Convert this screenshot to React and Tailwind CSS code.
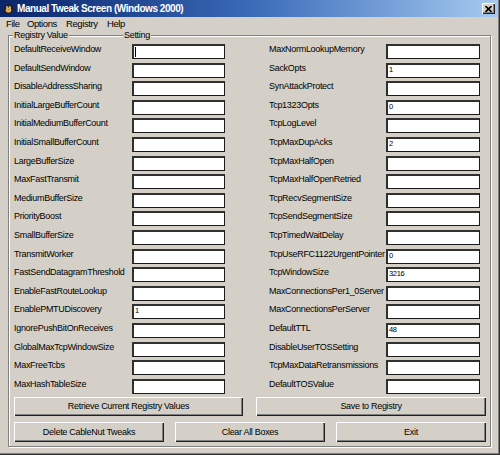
import React from "react";

const left = [
  ["DefaultReceiveWindow", "caret"],
  ["DefaultSendWindow", ""],
  ["DisableAddressSharing", ""],
  ["InitialLargeBufferCount", ""],
  ["InitialMediumBufferCount", ""],
  ["InitialSmallBufferCount", ""],
  ["LargeBufferSize", ""],
  ["MaxFastTransmit", ""],
  ["MediumBufferSize", ""],
  ["PriorityBoost", ""],
  ["SmallBufferSize", ""],
  ["TransmitWorker", ""],
  ["FastSendDatagramThreshold", ""],
  ["EnableFastRouteLookup", ""],
  ["EnablePMTUDiscovery", "1"],
  ["IgnorePushBitOnReceives", ""],
  ["GlobalMaxTcpWindowSize", ""],
  ["MaxFreeTcbs", ""],
  ["MaxHashTableSize", ""],
];

const right = [
  ["MaxNormLookupMemory", ""],
  ["SackOpts", "1"],
  ["SynAttackProtect", ""],
  ["Tcp1323Opts", "0"],
  ["TcpLogLevel", ""],
  ["TcpMaxDupAcks", "2"],
  ["TcpMaxHalfOpen", ""],
  ["TcpMaxHalfOpenRetried", ""],
  ["TcpRecvSegmentSize", ""],
  ["TcpSendSegmentSize", ""],
  ["TcpTimedWaitDelay", ""],
  ["TcpUseRFC1122UrgentPointer", "0"],
  ["TcpWindowSize", "3216"],
  ["MaxConnectionsPer1_0Server", ""],
  ["MaxConnectionsPerServer", ""],
  ["DefaultTTL", "48"],
  ["DisableUserTOSSetting", ""],
  ["TcpMaxDataRetransmissions", ""],
  ["DefaultTOSValue", ""],
];

function Box({ value, w }) {
  return (
    <div
      className={`${w} h-[15px] bg-white border-t-2 border-l-2 border-r border-b border-t-[#303030] border-l-[#303030] border-r-[#1a1a1a] border-b-[#1a1a1a] flex items-start`}
    >
      {value === "caret" ? (
        <span className="ml-px mt-px w-px h-[10px] bg-black" />
      ) : value ? (
        <span className="text-[7.5px] leading-[8px] text-black pl-px pt-px tracking-[-0.3px]">
          {value}
        </span>
      ) : null}
    </div>
  );
}

function Row({ label, value, lw, bw }) {
  return (
    <div className="h-[18.6px] flex items-start">
      <div className={`${lw} -mt-px text-[9px] leading-[12px] tracking-[-0.3px] text-black whitespace-nowrap`}>
        {label}
      </div>
      <Box value={value} w={bw} />
    </div>
  );
}

function Btn({ children, w, h }) {
  return (
    <div
      className={`${w} ${h} bg-[#d4d0c8] flex items-center justify-center text-[9px] tracking-[-0.3px] text-black shadow-[inset_1px_1px_0_#ffffff,inset_-1px_-1px_0_#202020,inset_-2px_-2px_0_#808080]`}
    >
      {children}
    </div>
  );
}

export default function App() {
  return (
    <div className="w-[500px] h-[455px] bg-[#d4d0c8] flex flex-col overflow-hidden font-['Liberation_Sans',Arial,sans-serif] shadow-[inset_-1px_-1px_0_#303030,inset_-2px_-2px_0_#808080,inset_-3px_-3px_0_#d4d0c8]">
      {/* Title bar */}
      <div className="h-[17px] mr-[2px] flex items-center bg-linear-to-r from-[#0a246a] via-[#3a6ab8] via-50% to-[#a6caf0]">
        <svg className="ml-[3px] w-[11px] h-[11px]" viewBox="0 0 11 11">
          <ellipse cx="5.5" cy="6" rx="4.5" ry="4.8" fill="#2a1c10" />
          <ellipse cx="5.5" cy="7" rx="2.8" ry="2.6" fill="#e0b060" />
          <circle cx="4.2" cy="4.2" r="1" fill="#fff" />
          <circle cx="6.8" cy="4.2" r="1" fill="#fff" />
          <circle cx="4.3" cy="4.3" r="0.45" fill="#000" />
          <circle cx="6.7" cy="4.3" r="0.45" fill="#000" />
          <path d="M4.5 6.2 L6.5 6.2 L5.5 7.3 Z" fill="#c05010" />
        </svg>
        <span className="ml-[3px] text-white font-bold text-[10px] leading-[12px] tracking-[-0.45px] whitespace-nowrap">
          Manual Tweak Screen (Windows 2000)
        </span>
        <div className="ml-auto mr-[3px] w-[13px] h-[11px] bg-[#d4d0c8] flex items-center justify-center shadow-[inset_1px_1px_0_#ffffff,inset_-1px_-1px_0_#202020,inset_-2px_-2px_0_#808080]">
          <svg width="7" height="6" viewBox="0 0 7 6">
            <path d="M0.5 0 L6.5 6 M6.5 0 L0.5 6" stroke="#000" strokeWidth="1.6" />
          </svg>
        </div>
      </div>

      {/* Menu bar */}
      <div className="h-[14px] flex items-center pl-[6px] text-[9.5px] leading-[12px] tracking-[-0.4px] text-black">
        <span className="w-[21px]">File</span>
        <span className="w-[39px]">Options</span>
        <span className="w-[41px]">Registry</span>
        <span>Help</span>
      </div>

      {/* Group box */}
      <div className="relative mt-[4px] ml-[8px] w-[483px] h-[412px] border border-[#808080] shadow-[inset_1px_1px_0_#ffffff,1px_1px_0_#ffffff] pt-[8px] pl-[5px]">
        <span className="absolute -top-[7px] left-[4px] px-px bg-[#d4d0c8] text-[9px] leading-[12px] tracking-[-0.3px] text-black">
          Registry Value
        </span>
        <span className="absolute -top-[7px] left-[114px] px-px bg-[#d4d0c8] text-[9px] leading-[12px] tracking-[-0.3px] text-black">
          Setting
        </span>

        <div className="flex">
          <div className="flex flex-col w-[211px]">
            {left.map(([l, v]) => (
              <Row key={l} label={l} value={v} lw="w-[118px]" bw="w-[93px]" />
            ))}
          </div>
          <div className="flex flex-col w-[211px] ml-[44px]">
            {right.map(([l, v]) => (
              <Row key={l} label={l} value={v} lw="w-[117px]" bw="w-[94px]" />
            ))}
          </div>
        </div>

        <div className="flex gap-[13px] mt-0">
          <Btn w="w-[229px]" h="h-[19px]">Retrieve Current Registry Values</Btn>
          <Btn w="w-[230px]" h="h-[19px]">Save to Registry</Btn>
        </div>
        <div className="flex gap-[11px] mt-[6px]">
          <Btn w="w-[150px]" h="h-[20px]">Delete CableNut Tweaks</Btn>
          <Btn w="w-[150px]" h="h-[20px]">Clear All Boxes</Btn>
          <Btn w="w-[150px]" h="h-[20px]">Exit</Btn>
        </div>
      </div>
    </div>
  );
}
